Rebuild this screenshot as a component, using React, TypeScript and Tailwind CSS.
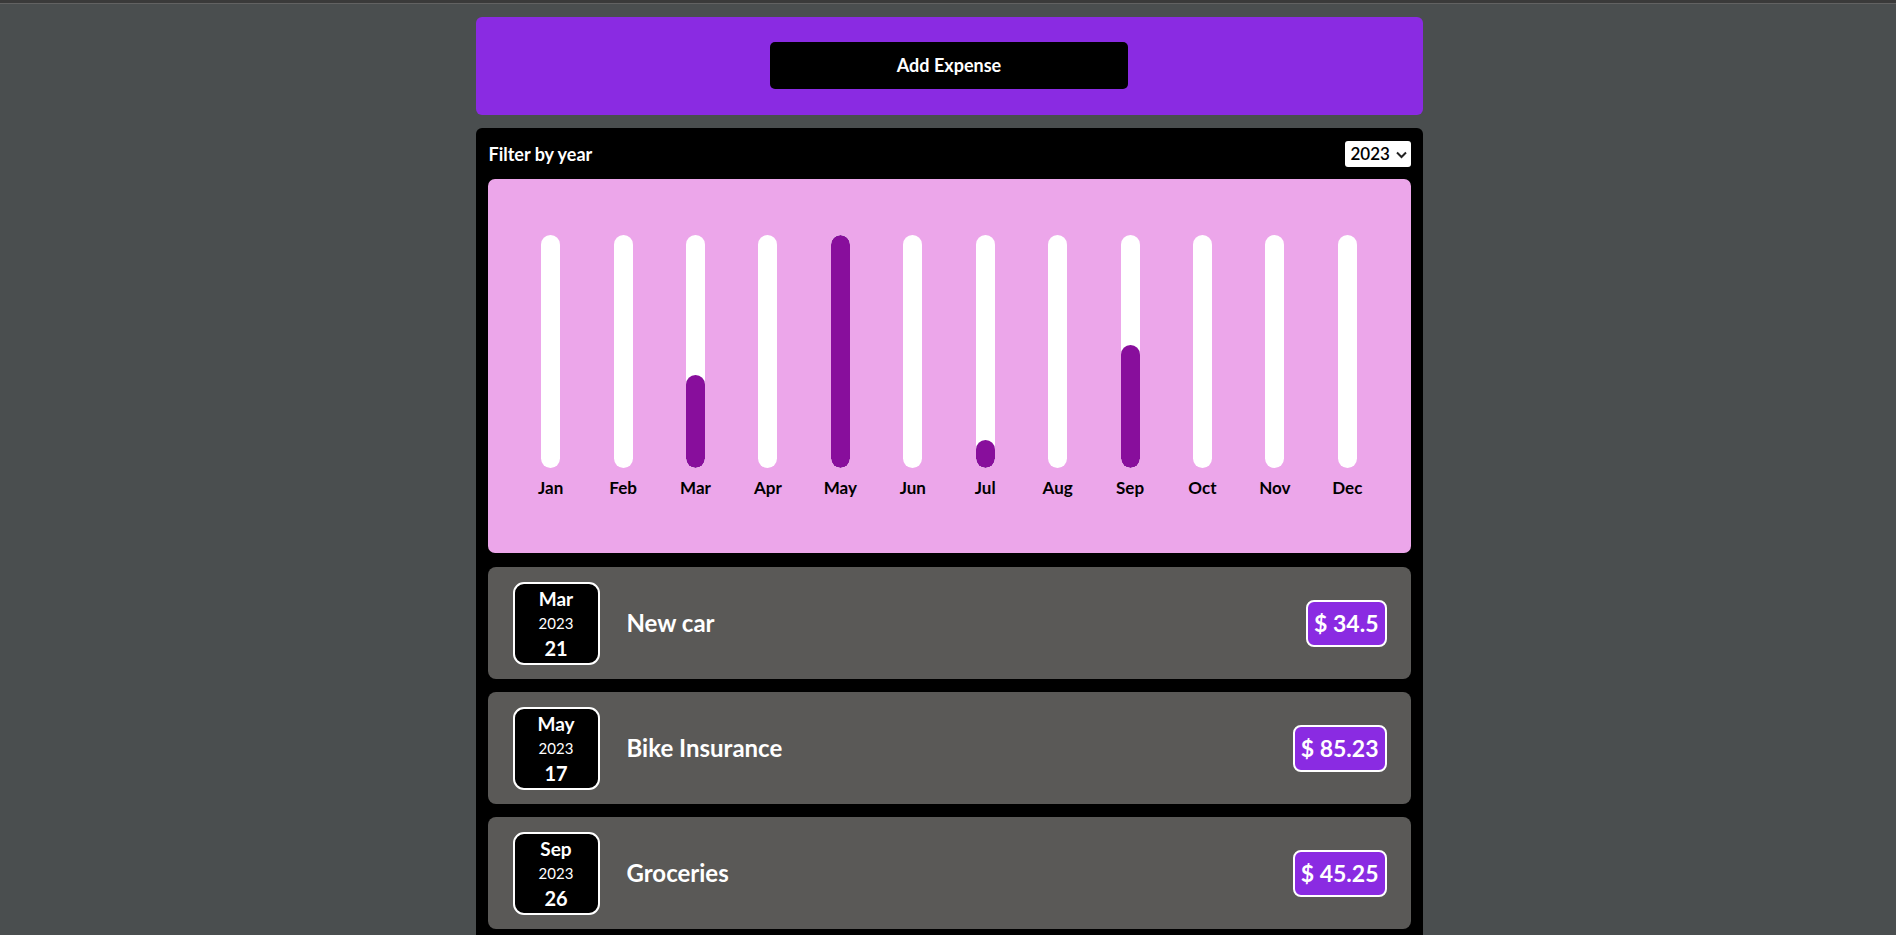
import React from "react";

type Expense = { id: string; title: string; amount: number; date: Date };

const expenses: Expense[] = [
  { id: "e1", title: "New car", amount: 34.5, date: new Date(2023, 2, 21) },
  { id: "e2", title: "Bike Insurance", amount: 85.23, date: new Date(2023, 4, 17) },
  { id: "e3", title: "Groceries", amount: 45.25, date: new Date(2023, 8, 26) },
  { id: "e4", title: "Books", amount: 10.3, date: new Date(2023, 6, 4) },
];

const MONTHS = ["Jan", "Feb", "Mar", "Apr", "May", "Jun", "Jul", "Aug", "Sep", "Oct", "Nov", "Dec"];

function ChartBar({ label, value, max }: { label: string; value: number; max: number }) {
  const pct = max > 0 ? Math.round((value / max) * 100) : 0;
  return (
    <div className="flex flex-col items-center">
      <div className="flex h-[233px] w-[19px] flex-col justify-end overflow-hidden rounded-full bg-white">
        {pct > 0 && <div className="w-full rounded-full bg-[#880e9c]" style={{ height: `${pct}%` }} />}
      </div>
      <div className="mt-[10px] text-[17px] font-bold leading-[20px] text-black">{label}</div>
    </div>
  );
}

function Chart({ items }: { items: Expense[] }) {
  const values = MONTHS.map((_, i) =>
    items.filter((e) => e.date.getMonth() === i).reduce((s, e) => s + e.amount, 0)
  );
  const max = Math.max(...values);
  return (
    <div className="grid grid-cols-12 rounded-[7px] bg-[#eca6ea] px-[27px] pt-[56px] pb-[55px]">
      {MONTHS.map((m, i) => (
        <ChartBar key={m} label={m} value={values[i]} max={max} />
      ))}
    </div>
  );
}

function ExpenseDate({ date }: { date: Date }) {
  return (
    <div className="flex h-[83px] w-[87px] shrink-0 flex-col items-center rounded-[11px] border-2 border-white bg-black pt-[3px] text-white">
      <div className="text-[19px] font-bold leading-[24px]">{MONTHS[date.getMonth()]}</div>
      <div className="text-[15px] leading-[24px]">{date.getFullYear()}</div>
      <div className="text-[20px] font-bold leading-[26px]">{date.getDate()}</div>
    </div>
  );
}

function ExpenseItem({ item }: { item: Expense }) {
  return (
    <div className="flex h-[112px] items-center rounded-[8px] bg-[#5a5957] pl-[25px] pr-[24px]">
      <ExpenseDate date={item.date} />
      <h2 className="ml-[27px] flex-1 text-[24px] font-bold text-white">{item.title}</h2>
      <div className="flex h-[47px] items-center rounded-[8px] border-2 border-white bg-[#8a2be2] px-[6px] text-[23px] font-bold text-white">
        $ {item.amount}
      </div>
    </div>
  );
}

export default function App() {
  return (
    <div className="min-h-screen bg-[#4a4e4f] font-['Lato','Liberation_Sans',sans-serif]">
      <div className="h-[3px] bg-[#3a3a3a]" />
      <div className="h-px bg-[#626262]" />
      <div className="pl-[2px]">
        <main className="mx-auto w-1/2 pt-[13px]">
          <div className="flex justify-center rounded-[6px] bg-[#8a2be2] pt-[25px] pb-[26px]">
            <button className="h-[47px] w-[358px] rounded-[5px] bg-black text-[18px] font-bold text-white">
              Add Expense
            </button>
          </div>

          <div className="mt-[13px] rounded-t-[6px] bg-black px-[12px] pt-[13px] pb-[13px]">
            <div className="mb-[12px] flex h-[26px] items-center justify-between">
              <span className="pl-px text-[18px] font-bold text-white">Filter by year</span>
              <div className="flex h-[26px] w-[66px] items-center rounded-[3px] bg-white pl-[6px] text-[17px] font-semibold text-black">
                2023
                <svg className="ml-[5px]" width="13" height="9" viewBox="0 0 13 9" fill="none">
                  <path d="M2 2.5 L6.5 7 L11 2.5" stroke="#222" strokeWidth="2" />
                </svg>
              </div>
            </div>

            <Chart items={expenses} />

            <div className="mt-[14px] flex flex-col gap-[13px]">
              {expenses.map((e) => (
                <ExpenseItem key={e.id} item={e} />
              ))}
            </div>
          </div>
        </main>
      </div>
    </div>
  );
}
